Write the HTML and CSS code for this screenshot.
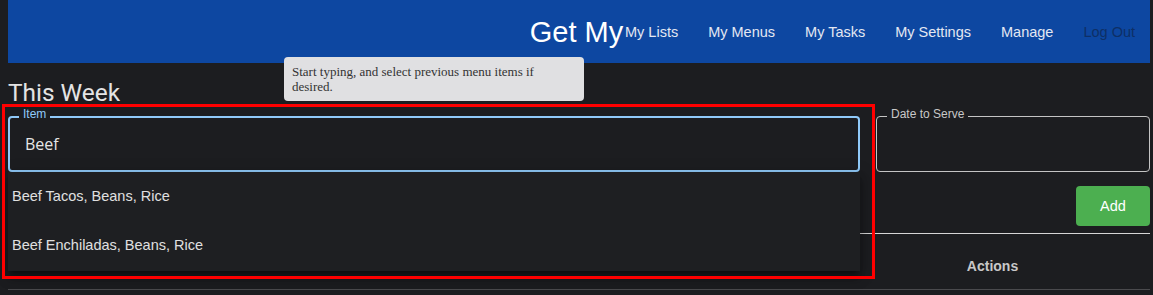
FILE: index.html
```html
<!DOCTYPE html>
<html lang="en">
<head>
<meta charset="utf-8">
<title>Get My - This Week</title>
<link rel="stylesheet" href="styles.css">
</head>
<body>
<div class="page">
  <header class="topbar">
    <div class="brand">Get My</div>
    <nav class="nav">
      <a class="nav-link" href="#">My Lists</a>
      <a class="nav-link" href="#">My Menus</a>
      <a class="nav-link" href="#">My Tasks</a>
      <a class="nav-link" href="#">My Settings</a>
      <a class="nav-link" href="#">Manage</a>
      <a class="nav-link nav-link-muted" href="#">Log Out</a>
    </nav>
  </header>

  <div class="tooltip">Start typing, and select previous menu items if desired.</div>

  <main class="content">
    <h2 class="title">This Week</h2>

    <form class="entry">
      <div class="fields">
        <div class="autocomplete">
          <div class="field field-focused">
            <span class="field-label field-label-focused">Item</span>
            <span class="field-value">Beef</span>
          </div>
          <ul class="options">
            <li class="option">Beef Tacos, Beans, Rice</li>
            <li class="option">Beef Enchiladas, Beans, Rice</li>
          </ul>
          <div class="highlight"></div>
        </div>
        <div class="field">
          <span class="field-label">Date to Serve</span>
          <span class="field-value"></span>
        </div>
      </div>
      <div class="entry-actions">
        <button type="button" class="btn-add">Add</button>
      </div>
    </form>

    <table class="menu-table">
      <colgroup>
        <col class="col-item">
        <col class="col-date">
        <col class="col-actions">
      </colgroup>
      <thead>
        <tr>
          <th>Item</th>
          <th>Date</th>
          <th>Actions</th>
        </tr>
      </thead>
    </table>
  </main>
</div>
</body>
</html>
```

FILE: styles.css
```css
html, body {
  margin: 0;
  padding: 0;
  background: #1c1d20;
}

body {
  font-family: "Liberation Sans", Arial, sans-serif;
  color: #e2e2e2;
}

.page {
  position: relative;
  padding: 0 3px 0 8px;
}

/* ---------- top bar ---------- */
.topbar {
  display: grid;
  height: 63px;
  background: #0d47a1;
  align-items: center;
}

.brand,
.nav {
  grid-area: 1 / 1;
}

.brand {
  justify-self: center;
  padding-right: 5px;
  font-size: 29px;
  color: #ffffff;
  line-height: 34px;
}

.nav {
  justify-self: end;
  display: flex;
}

.nav-link {
  padding: 0 15px;
  font-size: 14.5px;
  line-height: 20px;
  color: #e3e8f2;
  text-decoration: none;
}

.nav-link-muted {
  color: #0e2f66;
}

/* ---------- tooltip ---------- */
.tooltip {
  position: absolute;
  left: 284px;
  top: 57px;
  width: 300px;
  box-sizing: border-box;
  padding: 7px 8px 7px 8px;
  background: #e0e0e2;
  border-radius: 4px;
  font-family: "Liberation Serif", "Times New Roman", serif;
  font-size: 13px;
  line-height: 15px;
  color: #333333;
  z-index: 5;
}

/* ---------- content ---------- */
.title {
  margin: 15px 0 0 0;
  font-family: Roboto, "Liberation Sans", sans-serif;
  font-weight: 400;
  font-size: 24.4px;
  line-height: 30px;
  color: #e4e4e4;
}

.entry {
  margin-top: 8px;
}

.fields {
  display: grid;
  grid-template-columns: 852px 1fr;
  column-gap: 16px;
}

.autocomplete {
  position: relative;
}

.field {
  position: relative;
  display: flex;
  align-items: center;
  height: 56px;
  box-sizing: border-box;
  padding: 0 14px;
  border: 1px solid #c4c4c4;
  border-radius: 4px;
}

.field-focused {
  border: 2px solid #90caf9;
  padding: 0 14px 0 15px;
}

.field-label {
  position: absolute;
  top: -10px;
  left: 10px;
  padding: 0 4px;
  font-size: 12px;
  line-height: 14px;
  color: #c8c8c8;
  background: #1c1d20;
}

.field-label-focused {
  top: -11px;
  left: 9px;
  color: #90caf9;
}

.field-value {
  font-family: "Open Sans", "Liberation Sans", sans-serif;
  font-size: 16px;
  line-height: 22px;
  color: #e6e6e6;
}

/* ---------- dropdown ---------- */
.options {
  position: absolute;
  left: 0;
  right: 0;
  top: 56px;
  margin: 0;
  padding: 0 0 2px 0;
  list-style: none;
  background: #1e1f22;
  box-shadow: 0 5px 5px -3px rgba(0, 0, 0, 0.3),
              0 8px 10px 1px rgba(0, 0, 0, 0.2),
              0 3px 14px 2px rgba(0, 0, 0, 0.18);
  z-index: 3;
}

.option {
  display: flex;
  align-items: center;
  height: 49px;
  padding: 0 4px;
  font-size: 14.5px;
  color: #e0e0e0;
}

.option:first-child {
  height: 48px;
}

.highlight {
  position: absolute;
  left: -6px;
  right: -15px;
  top: -12px;
  bottom: -107px;
  border: 3px solid #ff0000;
  z-index: 4;
  pointer-events: none;
}

/* ---------- add button ---------- */
.entry-actions {
  display: flex;
  justify-content: flex-end;
  margin-top: 14px;
}

.btn-add {
  width: 74px;
  height: 40px;
  border: 0;
  border-radius: 4px;
  background: #4caf50;
  color: #ffffff;
  font-family: "Liberation Sans", Arial, sans-serif;
  font-size: 14.5px;
}

/* ---------- table ---------- */
.menu-table {
  width: 100%;
  margin-top: 7px;
  border-collapse: collapse;
  table-layout: fixed;
}

.col-actions {
  width: 315px;
}

.menu-table th {
  padding: 22px 16px 13px;
  border-top: 1px solid #d6d6d6;
  border-bottom: 1px solid #4a4a4d;
  font-size: 14px;
  line-height: 20px;
  font-weight: 700;
  color: #c8c8c8;
  text-align: center;
}
```
